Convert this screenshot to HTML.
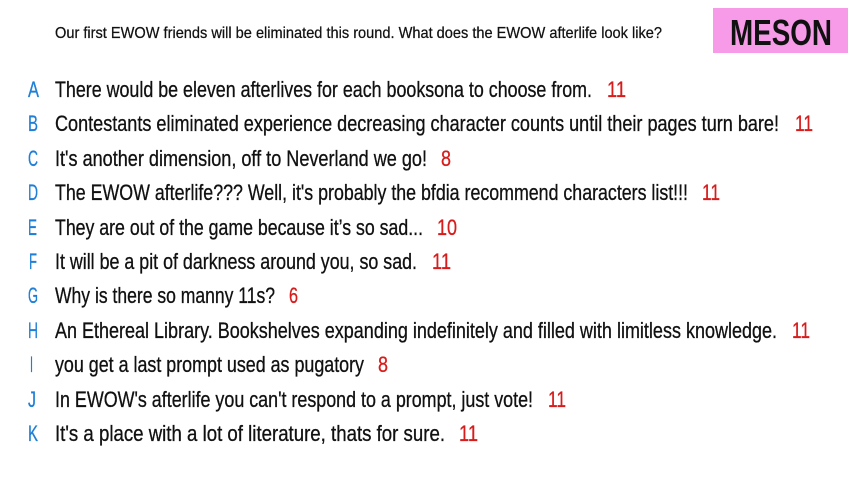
<!DOCTYPE html>
<html><head><style>
html,body{margin:0;padding:0;background:#fff;width:853px;height:480px;overflow:hidden}
svg{display:block}
text{font-family:"Liberation Sans",sans-serif}
</style></head><body>
<svg width="853" height="480" xmlns="http://www.w3.org/2000/svg">
<rect x="713" y="8" width="135" height="45" fill="#f79be9"/>
<text x="730" y="45" font-size="36" font-weight="bold" fill="#111" textLength="102" lengthAdjust="spacingAndGlyphs">MESON</text>
<text x="55" y="38" font-size="16" fill="#111" stroke="#111" stroke-width="0.25" textLength="607" lengthAdjust="spacingAndGlyphs">Our first EWOW friends will be eliminated this round. What does the EWOW afterlife look like?</text>
<g font-size="22" fill="#111" stroke="#111" stroke-width="0.3">
<g fill="#1f7fd6" stroke="#1f7fd6">
<text x="28" y="97" textLength="11" lengthAdjust="spacingAndGlyphs">A</text><text x="28" y="131" textLength="10" lengthAdjust="spacingAndGlyphs">B</text><text x="28" y="166" textLength="10" lengthAdjust="spacingAndGlyphs">C</text><text x="28" y="200" textLength="10" lengthAdjust="spacingAndGlyphs">D</text><text x="28" y="235" textLength="9" lengthAdjust="spacingAndGlyphs">E</text><text x="29" y="269" textLength="8" lengthAdjust="spacingAndGlyphs">F</text><text x="28" y="303" textLength="10" lengthAdjust="spacingAndGlyphs">G</text><text x="28" y="338" textLength="10" lengthAdjust="spacingAndGlyphs">H</text><text x="30" y="372" textLength="3" lengthAdjust="spacingAndGlyphs">I</text><text x="28" y="407" textLength="8" lengthAdjust="spacingAndGlyphs">J</text><text x="28" y="441" textLength="10" lengthAdjust="spacingAndGlyphs">K</text>
</g>
<text x="55" y="97" textLength="537" lengthAdjust="spacingAndGlyphs">There would be eleven afterlives for each booksona to choose from.</text>
<text x="55" y="131" textLength="724" lengthAdjust="spacingAndGlyphs">Contestants eliminated experience decreasing character counts until their pages turn bare!</text>
<text x="55" y="166" textLength="372" lengthAdjust="spacingAndGlyphs">It's another dimension, off to Neverland we go!</text>
<text x="55" y="200" textLength="633" lengthAdjust="spacingAndGlyphs">The EWOW afterlife??? Well, it's probably the bfdia recommend characters list!!!</text>
<text x="55" y="235" textLength="368" lengthAdjust="spacingAndGlyphs">They are out of the game because it’s so sad...</text>
<text x="55" y="269" textLength="362" lengthAdjust="spacingAndGlyphs">It will be a pit of darkness around you, so sad.</text>
<text x="55" y="303" textLength="220" lengthAdjust="spacingAndGlyphs">Why is there so manny 11s?</text>
<text x="55" y="338" textLength="722" lengthAdjust="spacingAndGlyphs">An Ethereal Library. Bookshelves expanding indefinitely and filled with limitless knowledge.</text>
<text x="55" y="372" textLength="309" lengthAdjust="spacingAndGlyphs">you get a last prompt used as pugatory</text>
<text x="55" y="407" textLength="478" lengthAdjust="spacingAndGlyphs">In EWOW's afterlife you can't respond to a prompt, just vote!</text>
<text x="55" y="441" textLength="390" lengthAdjust="spacingAndGlyphs">It's a place with a lot of literature, thats for sure.</text>
<g fill="#d71c1c" stroke="#d71c1c">
<text x="607" y="97" textLength="19" lengthAdjust="spacingAndGlyphs">11</text><text x="795" y="131" textLength="18" lengthAdjust="spacingAndGlyphs">11</text><text x="441" y="166" textLength="10" lengthAdjust="spacingAndGlyphs">8</text><text x="702" y="200" textLength="18" lengthAdjust="spacingAndGlyphs">11</text><text x="437" y="235" textLength="20" lengthAdjust="spacingAndGlyphs">10</text><text x="432" y="269" textLength="19" lengthAdjust="spacingAndGlyphs">11</text><text x="289" y="303" textLength="9" lengthAdjust="spacingAndGlyphs">6</text><text x="792" y="338" textLength="18" lengthAdjust="spacingAndGlyphs">11</text><text x="378" y="372" textLength="10" lengthAdjust="spacingAndGlyphs">8</text><text x="548" y="407" textLength="18" lengthAdjust="spacingAndGlyphs">11</text><text x="459" y="441" textLength="19" lengthAdjust="spacingAndGlyphs">11</text>
</g>
</g>
</svg>
</body></html>
